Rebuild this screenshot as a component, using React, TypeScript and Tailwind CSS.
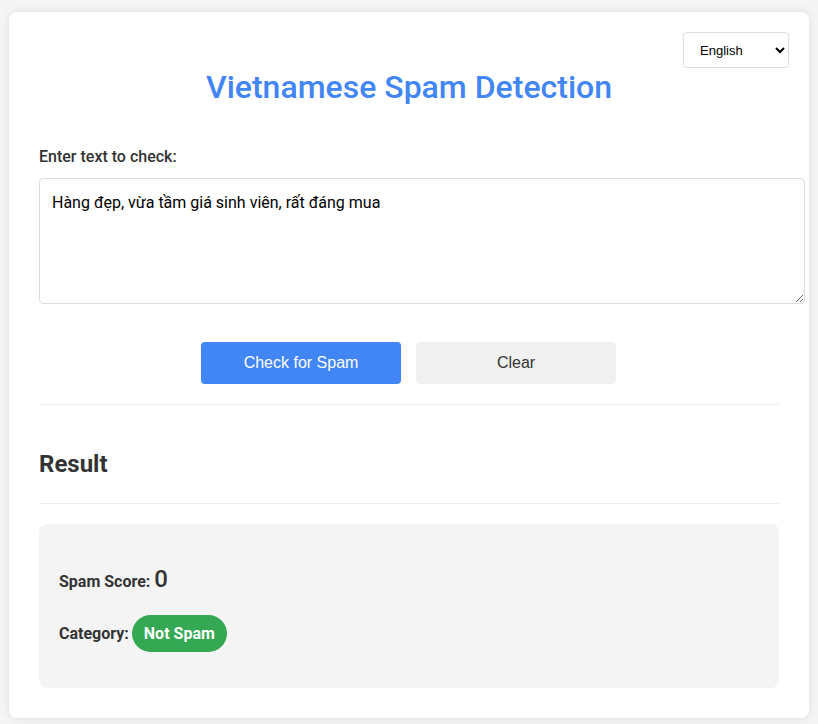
import { useState } from 'react';

const SAMPLE_TEXT = 'Hàng đẹp, vừa tầm giá sinh viên, rất đáng mua';

export default function App() {
  const [language, setLanguage] = useState('en');
  const [text, setText] = useState(SAMPLE_TEXT);

  return (
    <div className="min-h-screen w-full bg-[#f5f5f5] pt-3 font-['Roboto',sans-serif] text-[#333]">
      <div className="relative mx-auto w-[800px] rounded-lg bg-white px-[30px] pt-[30px] pb-[30px] shadow-[0_0_10px_rgba(0,0,0,0.1)]">
        <select
          value={language}
          onChange={(e) => setLanguage(e.target.value)}
          className="absolute top-5 right-5 h-[36px] w-[106px] rounded border border-[#ddd] bg-white px-[12px] font-['Liberation_Sans',Arial,sans-serif] text-[13px] text-black"
        >
          <option value="en">English</option>
          <option value="vi">Tiếng Việt</option>
        </select>

        <h1 className="mt-[26px] text-center text-[32px] leading-[38px] font-medium text-[#4285f4]">
          Vietnamese Spam Detection
        </h1>

        <label className="mt-[41px] block text-[16px] leading-[19px] font-medium text-[#333]">
          Enter text to check:
        </label>
        <textarea
          value={text}
          onChange={(e) => setText(e.target.value)}
          className="mt-[12px] block h-[126px] w-[calc(100%+26px)] rounded border border-[#ddd] bg-white p-[12px] font-['Roboto',sans-serif] text-[16px] text-black"
        />

        <div className="mt-[38px] flex justify-center gap-[15px] pr-px">
          <button className="h-[42px] w-[200px] rounded bg-[#4285f4] font-['Liberation_Sans',Arial,sans-serif] text-[16px] text-white">
            Check for Spam
          </button>
          <button
            onClick={() => setText('')}
            className="h-[42px] w-[200px] rounded bg-[#f0f0f0] font-['Liberation_Sans',Arial,sans-serif] text-[16px] text-[#333]"
          >
            Clear
          </button>
        </div>

        <div className="mt-[20px] h-px bg-[#eee]" />

        <h2 className="mt-[45px] text-[24px] leading-[28px] font-bold text-[#333]">Result</h2>

        <div className="mt-[25px] h-px bg-[#eee]" />

        <div className="mt-[20px] rounded-lg bg-[#f4f4f4] px-5 pt-[41px] pb-[36px]">
          <div className="flex items-baseline gap-[4px]">
            <span className="text-[16px] leading-[19px] font-bold">Spam Score:</span>
            <span className="text-[24px] leading-[28px] font-medium">0</span>
          </div>
          <div className="mt-[22px] flex items-center gap-[3px]">
            <span className="text-[16px] leading-[19px] font-bold">Category:</span>
            <span className="flex h-[37px] items-center rounded-full bg-[#34a853] px-3 text-[16px] font-bold text-white">
              Not Spam
            </span>
          </div>
        </div>
      </div>
    </div>
  );
}
